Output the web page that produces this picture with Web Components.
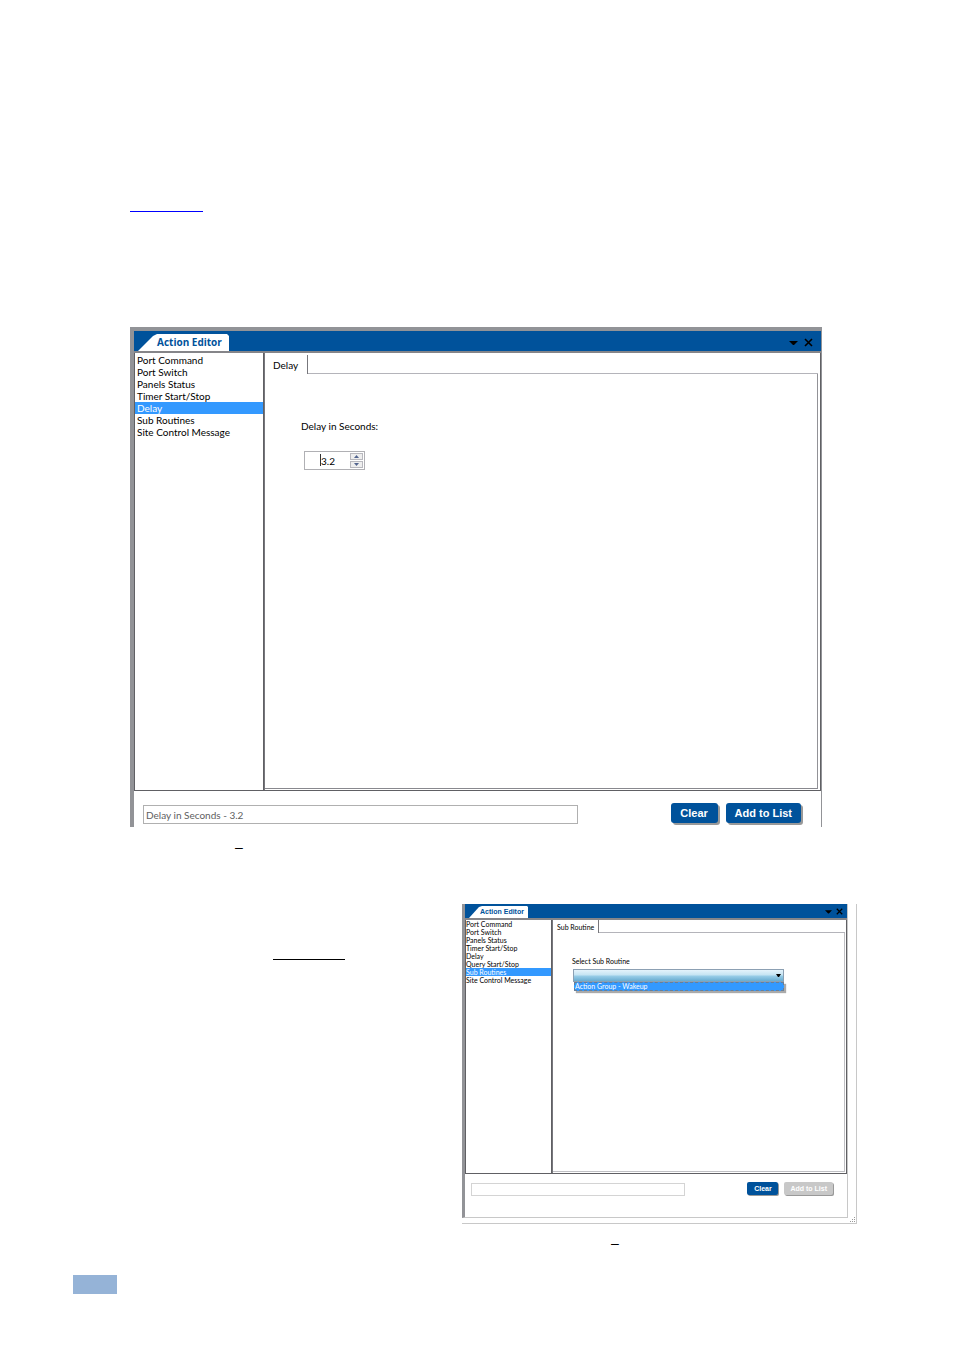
<!DOCTYPE html>
<html lang="en">
<head>
<meta charset="utf-8">
<title>Action Editor</title>
<style>
body { margin: 0; background: #fff; color: #000; font-family: Lato, "Liberation Sans", sans-serif; }
</style>
</head>
<body>
<manual-page></manual-page>

<script>
const define = (name, html, setup) => {
  const template = document.createElement('template');
  template.innerHTML = '<style>*{box-sizing:border-box}</style>' + html;
  customElements.define(name, class extends HTMLElement {
    constructor() {
      super();
      this.attachShadow({ mode: 'open' }).append(template.content.cloneNode(true));
    }
    connectedCallback() {
      if (setup) setup(this, this.shadowRoot);
    }
  });
};

define('action-window', `
<style>
:host { display: block; --fs: 10px; --row: 12px; --list: 130px; --bar: 20px; --edge: 4px; --top: 4px; --body: 438px;
  border-left: var(--edge) solid #929397; border-right: 1px solid #929397; border-top: var(--top) solid #929397; }
:host([compact]) { --fs: 7px; --row: 8px; --list: 87px; --bar: 14px; --edge: 3px; --top: 0px; --body: 254px;
  border-right-color: #c8c8c8; border-bottom: 1px solid #c8c8c8; }
header { display: flex; align-items: flex-end; height: var(--bar); background: #00529b; padding: 0 8px 0 4px; }
h2 { margin: 0; height: 17px; width: 91px; padding-left: 19px; background: #fff; color: #00529b;
  clip-path: polygon(0 100%, 15px 2px, 19px 0, 89px 0, 100% 2px, 100% 100%);
  font: bold 10px/16px "Open Sans", sans-serif; white-space: nowrap; }
:host([compact]) h2 { height: 12px; width: 59px; padding-left: 11px; font: bold 7px/12px "Liberation Sans", sans-serif;
  clip-path: polygon(0 100%, 10px 1px, 13px 0, 58px 0, 100% 1px, 100% 100%); }
.tools { display: flex; gap: 6px; margin-left: auto; align-self: center; padding-top: 2px; }
:host([compact]) header { padding-right: 4px; }
:host([compact]) .tools { gap: 4px; padding-top: 1px; }
.tools button { display: block; border: 0; padding: 0; background: none; width: 9px; height: 9px; }
:host([compact]) .tools button { width: 7px; height: 7px; }
.tools svg { display: block; width: 100%; height: 100%; }
.body { display: grid; grid-template-columns: var(--list) 1fr; min-height: calc(var(--body) + 2px);
  border-top: 2px solid #858589; border-bottom: 1px solid #606064; }
::slotted([slot=list]) { border-left: 1px solid #606064; border-right: 1px solid #606064; }
::slotted([slot=panel]) { border-left: 1px solid #77777c; border-right: 1px solid #606064; }
</style>
<header><h2></h2><div class="tools">
<button aria-label="Window menu"><svg viewBox="0 0 9 9"><path d="M0 3h9L5 7H4z"/></svg></button>
<button aria-label="Close"><svg viewBox="0 0 9 9"><path d="M1 1l7 7M8 1L1 8" stroke="#000" stroke-width="1.6"/></svg></button>
</div></header>
<div class="body"><slot name="list"></slot><slot name="panel"></slot></div>
<slot name="footer"></slot>`,
(el, root) => { root.querySelector('h2').textContent = el.getAttribute('heading'); });

define('action-list', `
<style>
:host { display: block; padding-top: 1px; }
:host([compact]) { padding-top: 0; }
ul { list-style: none; margin: 0; padding: 0; }
button { display: block; width: 100%; border: 0; margin: 0; padding: 0 0 0 2px; background: none; color: #000; text-align: left;
  font-family: inherit; font-size: var(--fs); line-height: var(--row); height: var(--row); white-space: nowrap; }
:host([compact]) button { padding-left: 0; }
button[aria-current] { background: #3399ff; color: #fff; }
</style><ul></ul>`,
(el, root) => {
  const ul = root.querySelector('ul');
  for (const name of el.getAttribute('items').split('|')) {
    const li = document.createElement('li');
    const button = document.createElement('button');
    button.textContent = name;
    if (name === el.getAttribute('selected')) button.setAttribute('aria-current', 'true');
    li.append(button);
    ul.append(li);
  }
});

define('tab-panel', `
<style>
:host { display: flex; flex-direction: column; padding: 2px 2px 1px 0; }
:host([compact]) { padding: 0 1px 1px 0; }
.strip { display: flex; }
.strip::after { content: ""; flex: 1; border-bottom: 1px solid #b4b4ba; }
button { height: 19px; border: 0; border-right: 1px solid #77777c; padding: 0 9px 0 8px; background: #fff; color: #000;
  font-family: inherit; font-size: var(--fs); line-height: 16px; white-space: nowrap; }
:host([compact]) button { height: 13px; padding: 0 4px; line-height: 12px; }
.page { flex: 1; border-right: 1px solid #929297; border-bottom: 1px solid #88888e; padding: 45px 36px; }
:host([compact]) .page { padding: 23px 19px; border-color: #c0c0c4; }
</style>
<div class="strip" role="tablist"><button role="tab" aria-selected="true"></button></div>
<div class="page" role="tabpanel"><slot></slot></div>`,
(el, root) => { root.querySelector('button').textContent = el.getAttribute('tab'); });

define('delay-field', `
<style>
:host { display: block; }
label { display: block; font-size: var(--fs); line-height: 14px; }
.box { display: flex; width: 61px; height: 19px; margin: 18px 0 0 3px; border: 1px solid #b0b0b4; padding: 1px; }
input { flex: 1; width: 0; min-width: 0; border: 0; padding: 0 0 0 15px; outline: 0; font-family: inherit; font-size: var(--fs);
  appearance: textfield; background: linear-gradient(#333, #333) 14px 1px / 1px 12px no-repeat; }
input::-webkit-inner-spin-button { appearance: none; margin: 0; }
.spin { display: grid; gap: 1px; width: 13px; }
.spin button { display: flex; align-items: center; justify-content: center; border: 1px solid #b8b8be; padding: 0; background: #eee; min-height: 0; }
svg { width: 5px; height: 3px; fill: #53658f; }
</style>
<label for="seconds">Delay in Seconds:</label>
<div class="box"><input id="seconds" type="number" step="0.1" value="3.2">
<span class="spin"><button aria-label="Increase"><svg viewBox="0 0 5 3"><path d="M0 3l2.500-3L5 3z"/></svg></button>
<button aria-label="Decrease"><svg viewBox="0 0 5 3"><path d="M0 0l2.500 3L5 0z"/></svg></button></span></div>`);

define('routine-picker', `
<style>
:host { display: block; }
label { display: block; font-size: var(--fs); line-height: 10px; }
.combo { position: relative; width: 211px; margin: 3px 0 0 1px; }
select { appearance: none; display: block; width: 100%; height: 13px; margin: 0; border: 1px solid #8ca0b3; border-radius: 0; padding: 0;
  background: linear-gradient(#e4f3fb, #c5e4f3 45%, #98cde8 55%, #68acd0); font-size: var(--fs); }
svg { position: absolute; right: 3px; top: 5px; width: 5px; height: 3px; }
ul { position: absolute; left: 1px; right: 0; top: 13px; margin: 0; padding: 0; list-style: none; box-shadow: 2px 2px 1px #aaa; }
li { height: 9px; padding-left: 1px; outline: 1px dashed #6a7f96; outline-offset: -1px; background: #3399ff; color: #fff;
  font-size: var(--fs); line-height: 9px; white-space: nowrap; }
</style>
<label for="routine">Select Sub Routine</label>
<div class="combo"><select id="routine"><option></option></select>
<svg viewBox="0 0 5 3"><path d="M0 0h5L3 3H2z"/></svg>
<ul role="listbox" aria-label="Sub routines"><li role="option" aria-selected="true">Action Group - Wakeup</li></ul></div>`);

define('action-footer', `
<style>
:host { display: flex; align-items: flex-start; gap: 8px; padding: 12px 20px 2px 9px; }
input { flex: 1; min-width: 0; height: 19px; margin: 2px 85px 0 0; border: 1px solid #b0b0b0; padding: 0 2px; background: #fff; color: #606060;
  font-family: inherit; font-size: var(--fs); }
button { height: 20px; min-width: 47px; border: 0; border-radius: 3px; padding: 0 9px; background: #00529b; color: #fff; box-shadow: 2px 2px 0 #999;
  font: bold 11px/19px "Liberation Sans", sans-serif; white-space: nowrap; margin-bottom: 2px; }
:host([compact]) { gap: 6px; padding: 8px 14px 20px 6px; }
:host([compact]) input { height: 13px; margin: 1px 56px 0 0; border-color: #d4d4d4; }
:host([compact]) button { height: 13px; min-width: 31px; padding: 0 6px; border-radius: 2px; font-size: 7px; line-height: 13px; box-shadow: 1px 1px 0 #999; }
button:disabled { background: #c8c8c8; }
</style>
<input aria-label="Action summary" readonly><button>Clear</button><button class="add">Add to List</button>`,
(el, root) => {
  root.querySelector('input').value = el.getAttribute('summary') || '';
  root.querySelector('.add').disabled = el.hasAttribute('locked');
});

define('manual-page', `
<style>
:host { display: block; padding: 211px 97px 57px 73px; }
main { padding-left: 57px; }
.ref { display: block; width: 73px; height: 1px; background: #0000ff; }
.ref.dark { width: 72px; background: #000; }
.large { margin: 115px 35px 0 0; }
.dash { margin: 0; font: 14px/16px "Liberation Sans", sans-serif; }
.first { padding: 12px 0 0 105px; }
.split { display: grid; grid-template-columns: minmax(0, 332px) minmax(395px, 1fr); margin-top: 49px; }
.split > a { margin: 55px 0 0 143px; }
.frame { position: relative; border-right: 1px solid #c8c8c8; border-bottom: 1px solid #c8c8c8; padding: 0 8px 5px 0; }
.grip { position: absolute; right: 1px; bottom: 1px; width: 5px; height: 5px; }
.second { padding: 11px 0 0 481px; }
.mark { width: 44px; height: 19px; margin-top: 24px; background: #95b3d7; }
</style>
<main>
<a class="ref" href="#delay" aria-label="Delay reference"></a>
<action-window class="large" heading="Action Editor" id="delay">
<action-list slot="list" selected="Delay" items="Port Command|Port Switch|Panels Status|Timer Start/Stop|Delay|Sub Routines|Site Control Message"></action-list>
<tab-panel slot="panel" tab="Delay"><delay-field></delay-field></tab-panel>
<action-footer slot="footer" summary="Delay in Seconds - 3.2"></action-footer>
</action-window>
<p class="dash first">–</p>
<div class="split">
<a class="ref dark" href="#routines" aria-label="Sub routine reference"></a>
<div class="frame" id="routines">
<action-window compact heading="Action Editor">
<action-list compact slot="list" selected="Sub Routines" items="Port Command|Port Switch|Panels Status|Timer Start/Stop|Delay|Query Start/Stop|Sub Routines|Site Control Message"></action-list>
<tab-panel compact slot="panel" tab="Sub Routine"><routine-picker></routine-picker></tab-panel>
<action-footer compact slot="footer" locked></action-footer>
</action-window>
<svg class="grip" viewBox="0 0 5 5"><path d="M4 0h1v1H4zM2 2h1v1H2zM4 2h1v1H4zM0 4h1v1H0zM2 4h1v1H2zM4 4h1v1H4z" fill="#999"/></svg>
</div>
</div>
<p class="dash second">–</p>
</main>
<div class="mark"></div>`);
</script>
</body>
</html>
